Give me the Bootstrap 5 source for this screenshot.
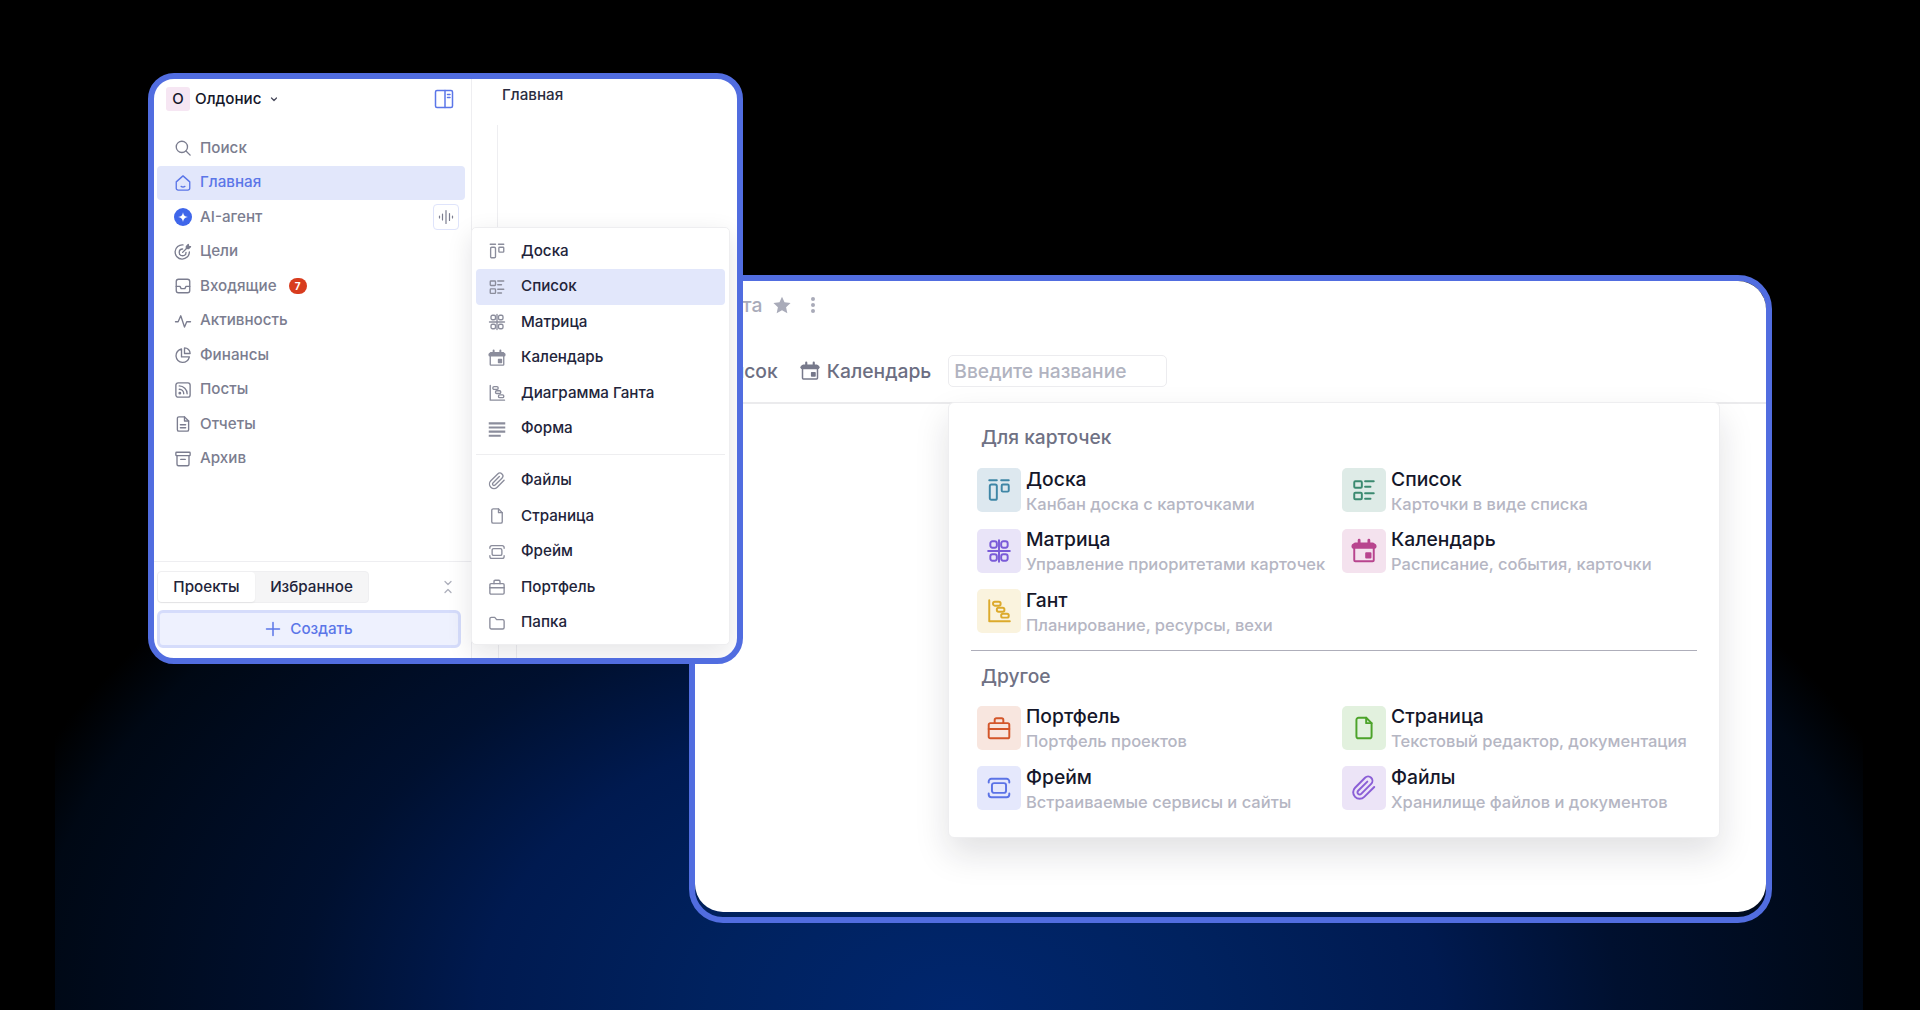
<!DOCTYPE html>
<html lang="ru">
<head>
<meta charset="utf-8">
<title>Олдонис</title>
<link href="https://cdn.jsdelivr.net/npm/bootstrap@5.3.0/dist/css/bootstrap.min.css" rel="stylesheet">
<style>
html,body{height:100%;margin:0;overflow:hidden;background:#000}
body{font-family:Inter,"Noto Sans",sans-serif}
.stage{position:relative;width:1920px;height:1010px;overflow:hidden;background:radial-gradient(ellipse 1000px 640px at 50% 100%,#00266e 0%,#00225f 25%,#001a50 48%,#00102f 66%,#000814 93%,#000 100%) 55px 0/1808px 1010px no-repeat,#000}
.win{position:absolute;border:6px solid #516de0}
.win-front{left:148px;top:73px;width:595px;height:591px;border-radius:26px;background:#fff;overflow:hidden;z-index:2}
.win-back{left:689px;top:275px;width:1083px;height:648px;border-radius:34px;z-index:1}
.back-body{position:relative;height:631px;background:#fff;border-radius:28px}
svg.ic{fill:none;stroke:currentColor;stroke-width:1.8;stroke-linecap:round;stroke-linejoin:round;flex:none;display:block}
.side{width:318px;flex:none;border-right:1px solid #eeeef1;height:100%}
.org{padding:8px 12px 0 12px;height:52px}
.org-mark{width:24px;height:24px;background:#f6e6f3;border-radius:3px;font-size:15px;font-weight:450;color:#15172a}
.org-name{font-size:15.2px;font-weight:450;color:#15172a;margin-left:5px}
.org-chev{color:#4a4c5e;margin-left:8px}
.panel-ic{color:#5b76e8;margin-left:auto;margin-right:5px;margin-top:-3px}
.nav-rows{padding:0 6px 0 3px}
.nav-row{height:34.5px;padding-left:17px;font-size:15.2px;font-weight:450;color:#7b7d8f;gap:8px;border-radius:4px}
.nav-row svg{color:#7b7d8f}
.nav-row.on{background:#e2e7fb;color:#5b76e8;height:34px;margin-bottom:.5px}
.nav-row.on svg{color:#5b76e8}
.voice{width:26px;height:26px;border:1.5px solid #dfe4fb;border-radius:4px;color:#5b76e8;margin-left:auto;margin-right:6px}
.count{background:#d83c1e;color:#fff;font-size:10px;font-weight:700;width:18px;height:16px;border-radius:8px;margin-left:4px}
.side-foot{border-top:1px solid #eeeef1;padding:9px 10px 10px 3px}
.tabs-box{width:212px;height:32px;background:#f5f5f6;border:1px solid #efeff1;border-radius:4px;font-size:15.2px;font-weight:450;color:#22243a}
.tab-on{width:97px;height:30px;background:#fff;border-radius:4px;box-shadow:0 1px 2px rgba(0,0,0,.06)}
.tab-off{width:113px;height:30px}
.fold{color:#aeb0bc;margin-left:auto;margin-right:7px}
.create{width:304px;height:38px;margin-top:7px;background:#eef1fe;border:3px solid #d5dcfb;border-radius:6px;color:#5b76e8;font-size:15.2px;font-weight:450;gap:9px;padding:0}
.crumb{padding:6px 0 0 30px;font-size:15.2px;font-weight:450;color:#2a2c40;line-height:20px}
.guide{width:1px;background:#eeeef1;position:absolute}
.g1{left:343px;top:46px;height:102px}
.g2{left:344px;top:560px;height:20px}
.g3{left:362px;top:560px;height:20px}
.popup{position:absolute;left:317px;top:148px;width:259px;height:418px;background:#fff;border:1px solid #eeeef0;border-radius:5px;box-shadow:0 8px 26px rgba(20,22,40,.11);padding:5.5px 4px}
.pop-row{height:35.5px;border-radius:4px;padding-left:12px;gap:15px;font-size:15.2px;font-weight:450;color:#22243a}
.pop-row svg{color:#8b8d9c}
.pop-row.on{background:#e2e7fb}
.pop-rule{height:1px;background:#eeeef0;margin:7.5px 0 8px}
.title-line{height:48px;padding:0 0 0 15px;font-size:19.3px;font-weight:450;color:#a9abb9}
.star{color:#a9abb9;margin-left:10px}
.dots{color:#a9abb9;margin-left:18px}
.tab-line{height:75px;padding:26px 0 15px 12px;border-bottom:2px solid #ebebed;font-size:19.3px;font-weight:450;color:#6c6e82}
.tab-cal{margin-left:22px;gap:7px;color:#6c6e82}
.tab-cal svg{color:#77798b}
.name-input{width:219px;height:32px;margin-left:17px;border:1px solid #ececef;border-radius:5px;padding:0 5px;font-size:19.2px;font-weight:450;color:#b1b3c0;background:#fff;line-height:28px}
.name-input::placeholder{color:#b1b3c0;opacity:1}
.chooser{position:absolute;left:253px;top:121px;width:772px;height:436px;background:#fff;border:1px solid #eeeef0;border-radius:6px;box-shadow:0 16px 34px rgba(20,22,40,.13);padding:22px 21px 0 22px}
.sect{font-size:19.2px;font-weight:450;color:#6f7184;line-height:24px;padding-left:10px;margin-bottom:19px}
.sect-other{margin-bottom:18px;margin-top:-.5px}
.tile-grid{display:grid;grid-template-columns:365px 1fr;grid-auto-rows:44px;row-gap:16.5px;padding-left:6px}
.tile-item{gap:5px}
.tile{width:44px;height:44px;border-radius:5px;flex:none}
.tile-name{font-size:19.3px;font-weight:450;color:#15172a;line-height:24px;margin-top:-1.5px}
.tile-sub{font-size:16.5px;font-weight:450;color:#b5b6c3;line-height:24px;margin-top:1px;white-space:nowrap}
.sect-rule{height:1px;background:#aeaeba;margin:17px 0 13px 0;width:726px}
</style>
</head>
<body>
<svg width="0" height="0" style="position:absolute">
<defs>
<symbol id="i-board" viewBox="0 0 24 24"><path d="M3 3h7M14 3h7"/><rect x="3.5" y="7" width="6.5" height="14" rx="1.5"/><rect x="14.5" y="7" width="6.5" height="6.5" rx="1"/></symbol>
<symbol id="i-list" viewBox="0 0 24 24"><rect x="3" y="4" width="7" height="6" rx="1"/><path d="M13 4h8M13 9h5M13 15h8M13 20h5"/><rect x="3" y="14.5" width="7" height="6" rx="1"/></symbol>
<symbol id="i-matrix" viewBox="0 0 24 24"><rect x="4" y="3" width="6" height="6" rx="2"/><rect x="14" y="3" width="6" height="6" rx="2"/><rect x="4" y="15" width="6" height="6" rx="2"/><rect x="14" y="15" width="6" height="6" rx="2"/><path d="M2 12h20M12 2v20"/></symbol>
<symbol id="i-cal" viewBox="0 0 24 24"><rect x="3" y="5" width="18" height="16.5" rx="1"/><path d="M3 7.5h18" stroke-width="5"/><path d="M7.500 2v3M16.500 2v3" stroke-width="2.6"/><rect x="14" y="14" width="4" height="4" fill="currentColor"/></symbol>
<symbol id="i-gantt" viewBox="0 0 24 24"><path d="M3 2v19.5h19"/><rect x="6.500" y="3.500" width="7" height="3.600" rx="1.600"/><rect x="10" y="9" width="7" height="3.600" rx="1.600"/><rect x="14" y="14.500" width="7" height="3.600" rx="1.600"/></symbol>
<symbol id="i-form" viewBox="0 0 24 24"><path d="M1 4.500h22M1 10h22M1 15.500h22M1 21h16" stroke-width="2.800" stroke-linecap="butt"/></symbol>
<symbol id="i-clip" viewBox="0 0 24 24"><path d="M21.440 11.050l-9.190 9.190a6 6 0 0 1-8.490-8.490l9.190-9.190a4 4 0 0 1 5.660 5.660l-9.200 9.190a2 2 0 0 1-2.830-2.830l8.490-8.480"/></symbol>
<symbol id="i-page" viewBox="0 0 24 24"><path d="M14 2.500H7a2 2 0 0 0-2 2v15a2 2 0 0 0 2 2h10a2 2 0 0 0 2-2V7.500z"/><path d="M14 2.500v5h5"/></symbol>
<symbol id="i-frame" viewBox="0 0 24 24"><rect x="5.500" y="7.500" width="13" height="9" rx="2"/><path d="M2.500 7V6a2.500 2.500 0 0 1 2.500-2.500h14A2.500 2.500 0 0 1 21.500 6v1M2.500 17v1A2.500 2.500 0 0 0 5 20.500h14a2.500 2.500 0 0 0 2.500-2.500v-1"/></symbol>
<symbol id="i-case" viewBox="0 0 24 24"><rect x="2.500" y="7.500" width="19" height="14" rx="1.500"/><path d="M8 7.500V4.500a1.500 1.500 0 0 1 1.500-1.500h5A1.500 1.500 0 0 1 16 4.500v3M2.500 13h19"/></symbol>
<symbol id="i-folder" viewBox="0 0 24 24"><path d="M2.500 6.500a2 2 0 0 1 2-2h4.500l2.500 3h8a2 2 0 0 1 2 2V18a2 2 0 0 1-2 2h-15a2 2 0 0 1-2-2z"/></symbol>
<symbol id="i-search" viewBox="0 0 24 24"><circle cx="10.500" cy="10.500" r="7.500"/><path d="M16 16l5.500 5.500"/></symbol>
<symbol id="i-home" viewBox="0 0 24 24"><path d="M3 10.500 12 2.500l9 8V19a2.500 2.500 0 0 1-2.500 2.500h-13A2.500 2.500 0 0 1 3 19z"/><path d="M9.500 16.500c1.500 1 3.500 1 5 0"/></symbol>
<symbol id="i-target" viewBox="0 0 24 24"><path d="M20.500 12A9.500 9.500 0 1 1 12 2.500"/><path d="M16 12.500A4.500 4.500 0 1 1 11.500 8"/><path d="M11.500 12.500 19 5"/><path d="M16.500 4.500 19 2l.5 2.500 2.500.5-2.500 2.500-3-.5z" fill="currentColor"/></symbol>
<symbol id="i-inbox" viewBox="0 0 24 24"><path d="M6 3h12a3 3 0 0 1 3 3v12a3 3 0 0 1-3 3H6a3 3 0 0 1-3-3V6a3 3 0 0 1 3-3z"/><path d="M3 12.500h5l1.500 3h5l1.500-3h5"/></symbol>
<symbol id="i-pulse" viewBox="0 0 24 24"><path d="M2 13h3.500L9 5l5 15 3-7h5"/></symbol>
<symbol id="i-pie" viewBox="0 0 24 24"><path d="M10 4a9 9 0 1 0 10.500 10.500H10z"/><path d="M14 2.500a7.500 7.500 0 0 1 7.500 7.500H14z"/></symbol>
<symbol id="i-rss" viewBox="0 0 24 24"><rect x="2.500" y="2.500" width="19" height="19" rx="3"/><path d="M7 11a6 6 0 0 1 6 6M7 6.500A10.500 10.500 0 0 1 17.500 17"/><circle cx="7.800" cy="16.200" r="1" fill="currentColor"/></symbol>
<symbol id="i-doc" viewBox="0 0 24 24"><path d="M14 2.500H6.500a2 2 0 0 0-2 2v15a2 2 0 0 0 2 2h11a2 2 0 0 0 2-2V8z"/><path d="M14 2.500V8h5.500M8.500 13h7M8.500 17h7"/></symbol>
<symbol id="i-archive" viewBox="0 0 24 24"><rect x="2.500" y="3" width="19" height="4.500" rx="1"/><path d="M4 7.500V19a2 2 0 0 0 2 2h12a2 2 0 0 0 2-2V7.500M9 12.500h6"/></symbol>
</defs>
</svg>

<div class="stage">

  <div class="win win-back">
    <div class="back-body">
      <div class="title-line d-flex align-items-center">
        <span>Ганта</span>
        <svg class="star" width="20" height="20" viewBox="0 0 24 24" aria-hidden="true"><path d="M12 2l3 6.800 7.300.8-5.400 5 1.500 7.300L12 18.200 5.600 21.900l1.500-7.300-5.400-5 7.300-.8z" fill="currentColor"/></svg>
        <svg class="dots" width="6" height="18" viewBox="0 0 6 18" aria-hidden="true"><circle cx="3" cy="3" r="2" fill="currentColor"/><circle cx="3" cy="9" r="2" fill="currentColor"/><circle cx="3" cy="15" r="2" fill="currentColor"/></svg>
      </div>
      <div class="tab-line d-flex align-items-center">
        <span>Список</span>
        <span class="tab-cal d-flex align-items-center"><svg class="ic" width="20" height="20"><use href="#i-cal"/></svg>Календарь</span>
        <input class="name-input" type="text" placeholder="Введите название">
      </div>
      <div class="chooser">
        <div class="sect">Для карточек</div>
        <div class="tile-grid">
          <div class="tile-item d-flex"><div class="tile d-flex align-items-center justify-content-center" style="background:#dde8ef;color:#3f86a6"><svg class="ic" width="26" height="26"><use href="#i-board"/></svg></div><div><div class="tile-name">Доска</div><div class="tile-sub">Канбан доска с карточками</div></div></div>
          <div class="tile-item d-flex"><div class="tile d-flex align-items-center justify-content-center" style="background:#deebe7;color:#3b8a70"><svg class="ic" width="26" height="26"><use href="#i-list"/></svg></div><div><div class="tile-name">Список</div><div class="tile-sub">Карточки в виде списка</div></div></div>
          <div class="tile-item d-flex"><div class="tile d-flex align-items-center justify-content-center" style="background:#e9e4f8;color:#7a5bd8"><svg class="ic" width="26" height="26"><use href="#i-matrix"/></svg></div><div><div class="tile-name">Матрица</div><div class="tile-sub">Управление приоритетами карточек</div></div></div>
          <div class="tile-item d-flex"><div class="tile d-flex align-items-center justify-content-center" style="background:#f4e2ee;color:#b8448e"><svg class="ic" width="26" height="26"><use href="#i-cal"/></svg></div><div><div class="tile-name">Календарь</div><div class="tile-sub">Расписание, события, карточки</div></div></div>
          <div class="tile-item d-flex"><div class="tile d-flex align-items-center justify-content-center" style="background:#faf3de;color:#dcaa2c"><svg class="ic" width="26" height="26"><use href="#i-gantt"/></svg></div><div><div class="tile-name">Гант</div><div class="tile-sub">Планирование, ресурсы, вехи</div></div></div>
        </div>
        <div class="sect-rule"></div>
        <div class="sect sect-other">Другое</div>
        <div class="tile-grid">
          <div class="tile-item d-flex"><div class="tile d-flex align-items-center justify-content-center" style="background:#f8e6df;color:#d3562a"><svg class="ic" width="26" height="26"><use href="#i-case"/></svg></div><div><div class="tile-name">Портфель</div><div class="tile-sub">Портфель проектов</div></div></div>
          <div class="tile-item d-flex"><div class="tile d-flex align-items-center justify-content-center" style="background:#e2f1de;color:#4ca32a"><svg class="ic" width="26" height="26"><use href="#i-page"/></svg></div><div><div class="tile-name">Страница</div><div class="tile-sub">Текстовый редактор, документация</div></div></div>
          <div class="tile-item d-flex"><div class="tile d-flex align-items-center justify-content-center" style="background:#e5e8fc;color:#5b73e6"><svg class="ic" width="26" height="26"><use href="#i-frame"/></svg></div><div><div class="tile-name">Фрейм</div><div class="tile-sub">Встраиваемые сервисы и сайты</div></div></div>
          <div class="tile-item d-flex"><div class="tile d-flex align-items-center justify-content-center" style="background:#ece4f7;color:#8a5ed6"><svg class="ic" width="26" height="26"><use href="#i-clip"/></svg></div><div><div class="tile-name">Файлы</div><div class="tile-sub">Хранилище файлов и документов</div></div></div>
        </div>
      </div>
    </div>
  </div>

  <div class="win win-front d-flex">
    <aside class="side d-flex flex-column">
      <div class="org d-flex align-items-start">
        <div class="org-mark d-flex align-items-center justify-content-center">О</div>
        <div class="org-name" style="line-height:24px">Олдонис</div>
        <svg class="ic org-chev" width="10" height="24" viewBox="0 0 10 24"><path d="M2.500 11l2.500 2.500L7.500 11" stroke-width="1.300"/></svg>
        <svg class="ic panel-ic" width="20" height="20" viewBox="0 0 20 20" style="margin-top:2px;stroke-width:1.500"><rect x="1.500" y="1.500" width="17" height="17" rx="1.500"/><path d="M11 1.500v17M13.500 5.500h2.500M13.500 8.500h2.500" /></svg>
      </div>
      <nav class="nav-rows">
        <div class="nav-row d-flex align-items-center"><svg class="ic" width="18" height="18"><use href="#i-search"/></svg>Поиск</div>
        <div class="nav-row on d-flex align-items-center"><svg class="ic" width="18" height="18"><use href="#i-home"/></svg>Главная</div>
        <div class="nav-row d-flex align-items-center"><svg width="18" height="18" viewBox="0 0 24 24" class="flex-none" aria-hidden="true"><circle cx="12" cy="12" r="12" fill="#3f66ea"/><path d="M12 5.500c.6 4 2.500 5.900 6.500 6.500-4 .6-5.900 2.500-6.500 6.500-.6-4-2.500-5.900-6.500-6.500 4-.6 5.900-2.500 6.500-6.500z" fill="#fff"/></svg>AI-агент
          <span class="voice d-flex align-items-center justify-content-center"><svg class="ic" width="16" height="16" viewBox="0 0 16 16" style="stroke-width:1.200"><path d="M1.500 7v2M4.500 5v6M8 1.500v13M11.500 4.500v7M14.500 7v2"/></svg></span></div>
        <div class="nav-row d-flex align-items-center"><svg class="ic" width="18" height="18"><use href="#i-target"/></svg>Цели</div>
        <div class="nav-row d-flex align-items-center"><svg class="ic" width="18" height="18"><use href="#i-inbox"/></svg>Входящие<span class="count d-flex align-items-center justify-content-center">7</span></div>
        <div class="nav-row d-flex align-items-center"><svg class="ic" width="18" height="18"><use href="#i-pulse"/></svg>Активность</div>
        <div class="nav-row d-flex align-items-center"><svg class="ic" width="18" height="18"><use href="#i-pie"/></svg>Финансы</div>
        <div class="nav-row d-flex align-items-center"><svg class="ic" width="18" height="18"><use href="#i-rss"/></svg>Посты</div>
        <div class="nav-row d-flex align-items-center"><svg class="ic" width="18" height="18"><use href="#i-doc"/></svg>Отчеты</div>
        <div class="nav-row d-flex align-items-center"><svg class="ic" width="18" height="18"><use href="#i-archive"/></svg>Архив</div>
      </nav>
      <div class="side-foot mt-auto">
        <div class="d-flex align-items-center">
          <div class="tabs-box d-flex">
            <div class="tab-on d-flex align-items-center justify-content-center">Проекты</div>
            <div class="tab-off d-flex align-items-center justify-content-center">Избранное</div>
          </div>
          <svg class="ic fold" width="12" height="14" viewBox="0 0 12 14" style="stroke-width:1.300"><path d="M3 1.500 6 4.500 9 1.500M3 12.500 6 9.500 9 12.500"/></svg>
        </div>
        <button class="create btn d-flex align-items-center justify-content-center" type="button"><svg class="ic" width="16" height="16" viewBox="0 0 16 16" style="stroke-width:1.500"><path d="M8 1.500v13M1.500 8h13"/></svg>Создать</button>
      </div>
    </aside>
    <main class="flex-grow-1">
      <div class="crumb">Главная</div>
    </main>
    <span class="guide g1"></span>
    <span class="guide g2"></span>
    <span class="guide g3"></span>
    <div class="popup">
      <div class="pop-row d-flex align-items-center"><svg class="ic" width="18" height="18"><use href="#i-board"/></svg>Доска</div>
      <div class="pop-row on d-flex align-items-center"><svg class="ic" width="18" height="18"><use href="#i-list"/></svg>Список</div>
      <div class="pop-row d-flex align-items-center"><svg class="ic" width="18" height="18"><use href="#i-matrix"/></svg>Матрица</div>
      <div class="pop-row d-flex align-items-center"><svg class="ic" width="18" height="18"><use href="#i-cal"/></svg>Календарь</div>
      <div class="pop-row d-flex align-items-center"><svg class="ic" width="18" height="18"><use href="#i-gantt"/></svg>Диаграмма Ганта</div>
      <div class="pop-row d-flex align-items-center"><svg class="ic" width="18" height="18"><use href="#i-form"/></svg>Форма</div>
      <div class="pop-rule"></div>
      <div class="pop-row d-flex align-items-center"><svg class="ic" width="18" height="18"><use href="#i-clip"/></svg>Файлы</div>
      <div class="pop-row d-flex align-items-center"><svg class="ic" width="18" height="18"><use href="#i-page"/></svg>Страница</div>
      <div class="pop-row d-flex align-items-center"><svg class="ic" width="18" height="18"><use href="#i-frame"/></svg>Фрейм</div>
      <div class="pop-row d-flex align-items-center"><svg class="ic" width="18" height="18"><use href="#i-case"/></svg>Портфель</div>
      <div class="pop-row d-flex align-items-center"><svg class="ic" width="18" height="18"><use href="#i-folder"/></svg>Папка</div>
    </div>
  </div>
</div>
<script src="https://cdn.jsdelivr.net/npm/bootstrap@5.3.0/dist/js/bootstrap.bundle.min.js"></script>
</body>
</html>
